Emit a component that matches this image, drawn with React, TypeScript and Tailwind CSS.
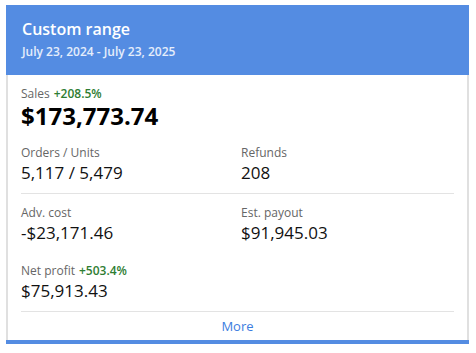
import React from "react";

const Stat = ({ label, value, delta }: { label: string; value: string; delta?: string }) => (
  <div>
    <div className="text-[12px] leading-[18px] text-[#666]">
      {label}
      {delta && <span className="ml-1 text-[12px] font-semibold text-[#2e7d32]">{delta}</span>}
    </div>
    <div className="text-[17px] leading-[22px] text-[#111]">{value}</div>
  </div>
);

export default function App() {
  return (
    <div className="bg-white w-[476px] h-[353px] pt-[5px] pl-[6px]" style={{ fontFamily: '"Open Sans", sans-serif' }}>
      <div className="w-[463px] border-b-4 border-[#548ce2]">
        <div className="bg-[#548ce2] h-[70px] pl-[16px] pt-[14px]">
          <div className="text-white text-[16px] font-semibold leading-[21px]">Custom range</div>
          <div className="text-white/85 text-[12px] font-semibold leading-[16px] mt-[4px]">July 23, 2024 - July 23, 2025</div>
        </div>
        <div className="border-x-2 border-[#e0e0e0] px-[13px]">
          <div className="pt-[10px]">
            <div className="text-[12px] leading-[18px] text-[#666]">
              Sales<span className="ml-1 text-[12px] font-semibold text-[#2e7d32]">+208.5%</span>
            </div>
            <div className="text-[24px] font-bold leading-[26px] text-black">$173,773.74</div>
          </div>
          <div className="grid grid-cols-[220px_1fr] pt-[15px] pb-[9px] border-b border-[#e3e3e3]">
            <Stat label="Orders / Units" value="5,117 / 5,479" />
            <Stat label="Refunds" value="208" />
          </div>
          <div className="grid grid-cols-[220px_1fr] pt-[10px]">
            <Stat label="Adv. cost" value="-$23,171.46" />
            <Stat label="Est. payout" value="$91,945.03" />
          </div>
          <div className="pt-[18px] pb-[9px] border-b border-[#e3e3e3]">
            <Stat label="Net profit" value="$75,913.43" delta="+503.4%" />
          </div>
          <div className="h-[28px] pt-[1px] flex items-center justify-center text-[13px] text-[#3b7de0]">More</div>
        </div>
      </div>
    </div>
  );
}
